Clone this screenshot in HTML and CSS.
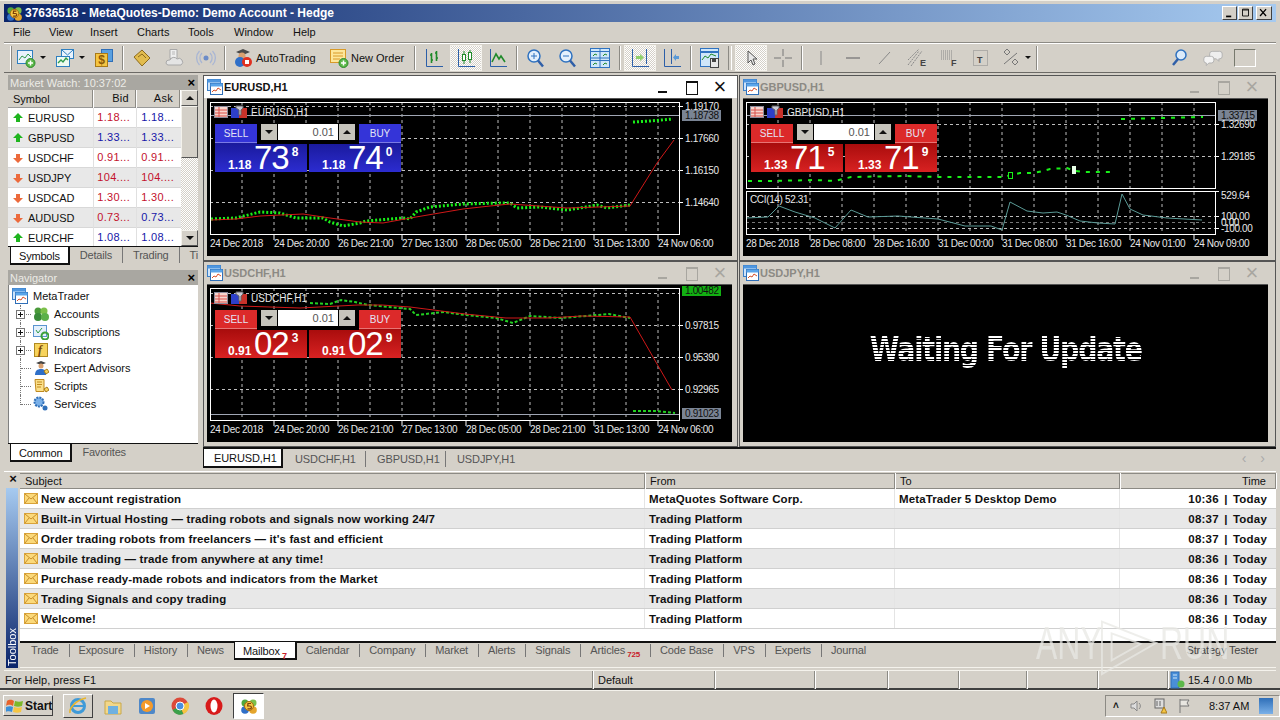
FILE: index.html
```html
<!DOCTYPE html>
<html lang="en">
<head>
  <meta charset="UTF-8">
  <title>37636518 - MetaQuotes-Demo: Demo Account - Hedge</title>
  <link rel="stylesheet" href="styles.css">
</head>
<body>
  <svg class="defs" width="0" height="0">
    <symbol id="i-chartwin" viewBox="0 0 16 16">
      <rect x="0.5" y="0.5" width="13" height="11" fill="#cfe4fa" stroke="#3c7fc8"/>
      <rect x="0.5" y="0.5" width="13" height="3" fill="#4f97e0"/>
      <rect x="3.5" y="4.5" width="12" height="11" fill="#fff" stroke="#2f6fb8"/>
      <rect x="3.5" y="4.5" width="12" height="3" fill="#5aa5ea"/>
      <path d="M5 13l2-2 2 1 2-3 3 2" fill="none" stroke="#d8502a"/>
    </symbol>
    <symbol id="i-mail" viewBox="0 0 14 11">
      <rect x="0.5" y="0.5" width="13" height="10" fill="#fbd97a" stroke="#d9a33a"/>
      <path d="M1 1l6 5 6-5M1 10l4-5M13 10l-4-5" fill="none" stroke="#c98f2a"/>
    </symbol>
    <symbol id="i-up" viewBox="0 0 10 10"><path d="M5 0l5 5H7v4H3V5H0z" fill="#1fb51f"/></symbol>
    <symbol id="i-down" viewBox="0 0 10 10"><path d="M5 10l5-5H7V1H3v4H0z" fill="#ec6a3c"/></symbol>
    <symbol id="i-mt5" viewBox="0 0 18 18">
      <circle cx="5" cy="6" r="3.5" fill="#4fa83d"/>
      <circle cx="13" cy="6" r="3.5" fill="#7cc04a"/>
      <circle cx="5" cy="13" r="3.8" fill="#2f6fc8"/>
      <circle cx="13" cy="13" r="3.8" fill="#e4a52c"/>
      <circle cx="9" cy="9" r="4.5" fill="#f5c542" stroke="#a86a12"/>
      <path d="M11 6.5H8L7.700 9h2.300a1.400 1.400 0 010 2.800H7.500" fill="none" stroke="#7a3d08" stroke-width="1.200"/>
    </symbol>
    <symbol id="i-bookmark" viewBox="0 0 20 20">
      <path d="M2 9l8-7 8 8-8 8z" fill="#e2bc4e" stroke="#8c6a1c"/>
      <path d="M6 9l4-3 4 4" fill="none" stroke="#8c6a1c"/>
    </symbol>
    <symbol id="i-tabs" viewBox="0 0 14 14">
      <rect x="0.5" y="1.500" width="13" height="11" fill="#f7d4cc" stroke="#8c8c9c"/>
      <path d="M1 5h12M1 8h12M1 11h12M5 2v10" stroke="#d8504a"/>
    </symbol>
    <symbol id="i-flags" viewBox="0 0 16 14">
      <rect x="0" y="3" width="8" height="10" fill="#2d3fc8"/>
      <rect x="8" y="3" width="8" height="10" fill="#c8322a"/>
      <path d="M5 1h7v2l-2 2v5H8V5L5 3z" fill="#c9c9d4" stroke="#666"/>
    </symbol>
  </svg>

  <div class="app">
    <header class="titlebar">
      <svg class="title-logo"><use href="#i-mt5"/></svg>
      <span class="title-text">37636518 - MetaQuotes-Demo: Demo Account - Hedge</span>
      <div class="win-buttons">
        <span class="win-btn"><svg viewBox="0 0 14 14"><path d="M3 11h6" stroke="#000" stroke-width="2"/></svg></span>
        <span class="win-btn"><svg viewBox="0 0 14 14"><path d="M3.500 2.500h7v8h-7zM3.500 3.500h7" fill="none" stroke="#000"/></svg></span>
        <span class="win-btn"><svg viewBox="0 0 14 14"><path d="M3 2.500l7 8M10 2.500l-7 8" stroke="#000" stroke-width="1.500"/></svg></span>
      </div>
    </header>

    <nav class="menubar">
      <span class="menu-item">File</span>
      <span class="menu-item">View</span>
      <span class="menu-item">Insert</span>
      <span class="menu-item">Charts</span>
      <span class="menu-item">Tools</span>
      <span class="menu-item">Window</span>
      <span class="menu-item">Help</span>
    </nav>

    <div class="toolbar">
      <span class="grip"></span>
      <span class="tool tool-drop"><svg viewBox="0 0 20 20"><rect x="1.500" y="2.500" width="15" height="13" fill="#e8f2fc" stroke="#2f7fc0"/><path d="M3 12l3-4 3 2 3-4 3 3" fill="none" stroke="#2f9a4a"/><circle cx="14.500" cy="15" r="4.500" fill="#5cb84a" stroke="#2d8a2d"/><path d="M14.500 12.500v5M12 15h5" stroke="#fff" stroke-width="1.500"/></svg><i class="caret"></i></span>
      <span class="tool tool-drop tool-drop-2"><svg viewBox="0 0 20 20"><rect x="6.500" y="1.500" width="12" height="9" fill="#e8f2fc" stroke="#2f7fc0"/><path d="M7 2l5.500 5L18 2" fill="none" stroke="#2f7fc0"/><rect x="1.500" y="8.500" width="13" height="10" fill="#eefaf0" stroke="#2f7fc0"/><path d="M3 15l3-3 2 2 3-4 2 2" fill="none" stroke="#2f9a4a" stroke-width="1.300"/></svg><i class="caret"></i></span>
      <span class="tool"><svg viewBox="0 0 20 20"><rect x="7.500" y="1.500" width="11" height="12" fill="#5aa0e0" stroke="#2f6fb8"/><rect x="1.500" y="5.500" width="12" height="13" fill="#f5c542" stroke="#a87a18"/><text x="7.500" y="16" class="tool-dollar">$</text></svg></span>
      <span class="tool-sep"></span>
      <span class="tool"><svg viewBox="0 0 20 20"><use href="#i-bookmark"/></svg></span>
      <span class="tool"><svg viewBox="0 0 20 20"><path d="M6 1.500h7v9H6z" fill="#eee" stroke="#a8a8a8"/><path d="M8 4h3M8 6h3" stroke="#b8b8b8"/><path d="M2 15a3 3 0 013-3h1a4 4 0 017-1 3.500 3.500 0 014 6H4a2.500 2.500 0 01-2-2z" fill="#e4e4e4" stroke="#a8a8a8"/></svg></span>
      <span class="tool"><svg viewBox="0 0 20 20"><circle cx="10" cy="10" r="2.500" fill="#6c8cc8"/><path d="M6 5a7 7 0 000 10M14 5a7 7 0 010 10M3.500 3a10 10 0 000 14M16.500 3a10 10 0 010 14" fill="none" stroke="#a9b6d4" stroke-width="1.300"/></svg></span>
      <span class="tool-sep"></span>
      <span class="tool tool-text tool-auto"><svg viewBox="0 0 20 20"><path d="M3 4l7-3 7 3-7 3z" fill="#4a4a4a"/><circle cx="9" cy="8" r="3.500" fill="#d9a070"/><circle cx="7" cy="14" r="5" fill="#2f6fc8"/><circle cx="14" cy="14" r="5" fill="#e03020"/><rect x="12" y="12" width="4" height="4" fill="#fff"/></svg>AutoTrading</span>
      <span class="tool tool-text tool-order"><svg viewBox="0 0 20 20"><rect x="1.500" y="1.500" width="15" height="13" fill="#fde79a" stroke="#d89a28"/><path d="M4 5h10M4 8h10M4 11h7" stroke="#d89a28"/><circle cx="14.500" cy="15" r="4.500" fill="#5cb84a" stroke="#2d8a2d"/><path d="M14.500 12.500v5M12 15h5" stroke="#fff" stroke-width="1.500"/></svg>New Order</span>
      <span class="tool-sep"></span>
      <span class="tool"><svg viewBox="0 0 20 20"><path d="M2.500 1v17.500H19" fill="none" stroke="#2c5fa8"/><path d="M7.500 5v10M6 7h1.500M7.500 12H9M12.500 3v10M11 5h1.500M12.500 10H14" stroke="#1f8a2a" stroke-width="1.600"/></svg></span>
      <span class="tool tool-on"><svg viewBox="0 0 20 20"><path d="M2.500 1v17.500H19" fill="none" stroke="#2c5fa8"/><path d="M8 3v13M14 2v13" stroke="#1f8a2a"/><rect x="6.500" y="6.500" width="3" height="6" fill="#fff" stroke="#1f8a2a"/><rect x="12.500" y="4.500" width="3" height="7" fill="#fff" stroke="#1f8a2a"/></svg></span>
      <span class="tool"><svg viewBox="0 0 20 20"><path d="M2.500 1v17.500H19" fill="none" stroke="#2c5fa8"/><path d="M4 14l4-8 3 5 2-3 4 6" fill="none" stroke="#1f8a2a" stroke-width="1.600"/></svg></span>
      <span class="tool-sep"></span>
      <span class="tool"><svg viewBox="0 0 20 20"><circle cx="8" cy="8" r="6" fill="#e4f0fc" stroke="#2f72c0" stroke-width="1.500"/><path d="M8 5v6M5 8h6" stroke="#2f72c0"/><path d="M12 12.500l5 6" stroke="#2f5fa8" stroke-width="2.500"/></svg></span>
      <span class="tool"><svg viewBox="0 0 20 20"><circle cx="8" cy="8" r="6" fill="#e4f0fc" stroke="#2f72c0" stroke-width="1.500"/><path d="M5 8h6" stroke="#2f72c0"/><path d="M12 12.500l5 6" stroke="#2f5fa8" stroke-width="2.500"/></svg></span>
      <span class="tool"><svg viewBox="0 0 20 20"><rect x="0.500" y="0.500" width="19" height="19" fill="#cfe6fa" stroke="#2f72c0"/><path d="M1 10h18M10 1v18M1 3.500h18M1 12.500h18" stroke="#2f72c0"/><path d="M3 8l2-2 2 1M13 8l2-2 2 1M3 17l2-2 2 1M13 17l2-2 2 1" fill="none" stroke="#1f8a2a"/></svg></span>
      <span class="tool-sep tool-sep-wide"></span>
      <span class="tool tool-on"><svg viewBox="0 0 20 20"><path d="M2.500 1v17.500H19M16.500 1v15" fill="none" stroke="#2c5fa8"/><path d="M6 8h4V6l4 3.500-4 3.500v-2H6z" fill="#8fd06a"/></svg></span>
      <span class="tool"><svg viewBox="0 0 20 20"><path d="M2.500 1v17.500H19M9.500 1v15" fill="none" stroke="#2c5fa8"/><path d="M17 8h-3V6l-3 3.500 3 3.500v-2h3z" fill="#5a9ad8"/></svg></span>
      <span class="tool-sep"></span>
      <span class="tool"><svg viewBox="0 0 20 20"><rect x="0.500" y="0.500" width="18" height="18" fill="#cfe6fa" stroke="#2f72c0"/><path d="M1 4h17" stroke="#2f72c0" stroke-width="2"/><path d="M2 12l3-4 3 2 3-4 5 2" fill="none" stroke="#1f8a2a"/><rect x="10.500" y="10.500" width="8" height="9" fill="#e8e8e8" stroke="#444"/><rect x="12" y="11" width="4" height="3" fill="#444"/></svg></span>
      <span class="tool-sep tool-sep-double"></span>
      <span class="tool tool-on"><svg viewBox="0 0 20 20"><path d="M7 3v12l3-3 2 5 2-1-2-5h4z" fill="#e8e8e8" stroke="#555"/></svg></span>
      <span class="tool"><svg viewBox="0 0 20 20"><path d="M10 1v7M10 12v7M1 10h7M12 10h7" stroke="#777"/></svg></span>
      <span class="tool-sep"></span>
      <span class="tool"><svg viewBox="0 0 20 20"><path d="M10 3v14" stroke="#888"/></svg></span>
      <span class="tool"><svg viewBox="0 0 20 20"><path d="M3 10h14" stroke="#777" stroke-width="1.300"/></svg></span>
      <span class="tool"><svg viewBox="0 0 20 20"><path d="M4 16L15 4" stroke="#888"/></svg></span>
      <span class="tool"><svg viewBox="0 0 20 20"><path d="M1 17L12 3M4 18l11-15M1 12L12 1" stroke="#888" stroke-dasharray="2 1"/><text x="13" y="18" class="tool-letter">E</text></svg></span>
      <span class="tool"><svg viewBox="0 0 20 20"><path d="M2 3h12M2 5h12M2 7h12M2 9h12M2 11h12" stroke="#888" stroke-dasharray="1 1"/><text x="12" y="18" class="tool-letter">F</text></svg></span>
      <span class="tool"><svg viewBox="0 0 20 20"><rect x="2.500" y="2.500" width="14" height="15" fill="none" stroke="#888" stroke-dasharray="1 1"/><text x="6" y="15" class="tool-letter">T</text></svg></span>
      <span class="tool tool-narrow"><svg viewBox="0 0 20 20"><path d="M6 1l3 3-3 3-3-3zM14 11l3 3-3 3-3-3zM3 16L16 5" fill="none" stroke="#777"/></svg></span>
      <i class="caret caret-shapes"></i>
      <span class="tool-sep"></span>
      <span class="toolbar-fill"></span>
      <span class="tool"><svg viewBox="0 0 20 20"><circle cx="12" cy="7" r="5" fill="#dcebfa" stroke="#2f72c0" stroke-width="1.500"/><path d="M9 11l-5 6" stroke="#2f5fa8" stroke-width="2.500"/></svg></span>
      <span class="tool tool-chat"><svg viewBox="0 0 24 20"><path d="M11 2h9a3 3 0 013 3v3a3 3 0 01-3 3h-1v3l-3-3h-5a3 3 0 01-3-3V5a3 3 0 013-3z" fill="#eee" stroke="#aaa"/><path d="M4 8h6a3 3 0 013 3v2a3 3 0 01-3 3H7l-3 3v-3a3 3 0 01-3-3v-2a3 3 0 013-3z" fill="#f4f4f4" stroke="#aaa"/></svg></span>
      <span class="tool-box"></span>
    </div>

    <main class="workspace">
      <aside class="side">
        <section class="panel panel-market">
          <div class="panel-title"><span>Market Watch: 10:37:02</span><b class="panel-close">×</b></div>
          <div class="market">
            <div class="market-list">
              <div class="market-head"><span class="c-sym">Symbol</span><span class="c-num">Bid</span><span class="c-num">Ask</span></div>
              <div class="market-row"><span class="c-sym"><svg class="arrow"><use href="#i-up"/></svg>EURUSD</span><span class="c-num red">1.18...</span><span class="c-num blue">1.18...</span></div>
              <div class="market-row"><span class="c-sym"><svg class="arrow"><use href="#i-up"/></svg>GBPUSD</span><span class="c-num blue">1.33...</span><span class="c-num blue">1.33...</span></div>
              <div class="market-row"><span class="c-sym"><svg class="arrow"><use href="#i-down"/></svg>USDCHF</span><span class="c-num red">0.91...</span><span class="c-num red">0.91...</span></div>
              <div class="market-row"><span class="c-sym"><svg class="arrow"><use href="#i-down"/></svg>USDJPY</span><span class="c-num red">104....</span><span class="c-num red">104....</span></div>
              <div class="market-row"><span class="c-sym"><svg class="arrow"><use href="#i-down"/></svg>USDCAD</span><span class="c-num red">1.30...</span><span class="c-num red">1.30...</span></div>
              <div class="market-row"><span class="c-sym"><svg class="arrow"><use href="#i-down"/></svg>AUDUSD</span><span class="c-num red">0.73...</span><span class="c-num blue">0.73...</span></div>
              <div class="market-row"><span class="c-sym"><svg class="arrow"><use href="#i-up"/></svg>EURCHF</span><span class="c-num blue">1.08...</span><span class="c-num blue">1.08...</span></div>
            </div>
            <div class="scrollbar">
              <span class="scroll-btn"><i class="tri-up"></i></span>
              <span class="scroll-thumb"></span>
              <span class="scroll-track"></span>
              <span class="scroll-btn"><i class="tri-down"></i></span>
            </div>
          </div>
          <div class="side-tabs">
            <span class="side-tab active">Symbols</span>
            <span class="side-tab">Details</span>
            <span class="side-tab">Trading</span>
            <span class="side-tab cut">Ti</span>
          </div>
        </section>

        <section class="panel panel-nav">
          <div class="panel-title"><span>Navigator</span><b class="panel-close">×</b></div>
          <div class="tree">
            <div class="tree-root"><svg class="tree-icon"><use href="#i-chartwin"/></svg>MetaTrader</div>
            <div class="tree-row"><span class="twig"><i class="plus"></i></span>
              <svg class="tree-icon" viewBox="0 0 16 16"><circle cx="5" cy="5" r="3.500" fill="#4a9a3a"/><circle cx="11" cy="5" r="3.500" fill="#7cc04a"/><circle cx="5" cy="11" r="4" fill="#3a8a3a"/><circle cx="12" cy="11" r="4" fill="#5cb04a"/></svg>Accounts</div>
            <div class="tree-row"><span class="twig"><i class="plus"></i></span>
              <svg class="tree-icon" viewBox="0 0 16 16"><rect x="0.500" y="1.500" width="13" height="11" fill="#e4f0fc" stroke="#5a94d0"/><path d="M3 6l2 3 4-5" fill="none" stroke="#2f9a4a"/><circle cx="12" cy="12" r="3.500" fill="none" stroke="#3aa03a" stroke-width="2"/></svg>Subscriptions</div>
            <div class="tree-row"><span class="twig"><i class="plus"></i></span>
              <svg class="tree-icon" viewBox="0 0 16 16"><rect x="1.500" y="1.500" width="13" height="13" fill="#f7d35c" stroke="#b08a20"/><text x="5" y="12" class="tree-f">f</text></svg>Indicators</div>
            <div class="tree-row"><span class="twig"></span>
              <svg class="tree-icon" viewBox="0 0 16 16"><path d="M3 3l5-2 5 2-5 2z" fill="#444"/><circle cx="8" cy="6" r="2.500" fill="#d9a070"/><path d="M2 15c0-4 2-6 6-6s5 2 5 6z" fill="#2f6fc8"/><path d="M11 11l3-2 2 3-3 2z" fill="#f7d35c" stroke="#a87a18"/></svg>Expert Advisors</div>
            <div class="tree-row"><span class="twig"></span>
              <svg class="tree-icon" viewBox="0 0 16 16"><path d="M2 1.500h9v12H3z" fill="#fbe08a" stroke="#c08a20"/><path d="M4 4h5M4 6.500h5M4 9h4" stroke="#c08a20"/><path d="M11 11l3-2 2 3-3 2z" fill="#f7d35c" stroke="#a87a18"/></svg>Scripts</div>
            <div class="tree-row tree-last"><span class="twig"></span>
              <svg class="tree-icon" viewBox="0 0 16 16"><circle cx="6" cy="6" r="4.500" fill="#7ab0e8" stroke="#2f6fb8" stroke-width="2" stroke-dasharray="2 1"/><circle cx="12" cy="12" r="2.500" fill="#2f6fb8"/></svg>Services</div>
          </div>
          <div class="side-tabs side-tabs-nav">
            <span class="side-tab active">Common</span>
            <span class="side-tab">Favorites</span>
          </div>
        </section>
      </aside>

      <div class="mdi">
        <div class="charts">
          <article class="chartwin chartwin-active">
            <div class="win-head">
              <svg class="win-icon"><use href="#i-chartwin"/></svg>
              <span class="win-name">EURUSD,H1</span>
              <span class="win-ctl"><i class="ctl-min"></i><i class="ctl-max"></i><i class="ctl-close">×</i></span>
            </div>
            <div class="canvas">
              <svg class="plot" viewBox="207 100 525 156">
                <path class="grid" d="M242 102V234M274 102V234M306 102V234M338 102V234M370 102V234M402 102V234M434 102V234M466 102V234M498 102V234M530 102V234M562 102V234M594 102V234M626 102V234M658 102V234M210 106.500H679M210 138.500H679M210 170.500H679M210 202.500H679"/>
                <path class="price-line" d="M210 115.500H679"/>
                <polyline class="candles" points="211,219 236,218 260,212 280,213 296,218 323,218 330,222 343,226 360,223 366,221 403,218 410,219 416,212 430,207 463,204 500,203 510,203 517,208 540,207 567,210 580,208 597,205 607,208 630,205"/>
                <polyline class="candles" points="633,122 650,121 673,119"/>
                <polyline class="ma" points="211,220 236,219 260,216 303,214 330,218 360,222 383,223 416,217 463,209 490,206 510,204 567,208 630,206 657,163 674,140"/>
                <rect class="frame" x="210.500" y="102.500" width="469" height="132"/>
                <path class="tick" d="M274 234v6M338 234v6M402 234v6M466 234v6M530 234v6M594 234v6M658 234v6M679 106.500h4M679 138.500h4M679 170.500h4M679 202.500h4"/>
                <rect class="tag-gray" x="682" y="110" width="39" height="11"/>
                <g class="axis">
                  <text x="685" y="110">1.19170</text>
                  <text class="tag-text" x="685" y="119">1.18738</text>
                  <text x="685" y="142">1.17660</text>
                  <text x="685" y="174">1.16150</text>
                  <text x="685" y="206">1.14640</text>
                  <text x="210" y="247">24 Dec 2018</text>
                  <text x="274" y="247">24 Dec 20:00</text>
                  <text x="338" y="247">26 Dec 21:00</text>
                  <text x="402" y="247">27 Dec 13:00</text>
                  <text x="466" y="247">28 Dec 05:00</text>
                  <text x="530" y="247">28 Dec 21:00</text>
                  <text x="594" y="247">31 Dec 13:00</text>
                  <text x="658" y="247">24 Nov 06:00</text>
                </g>
              </svg>
              <div class="chart-label"><svg class="label-icon"><use href="#i-tabs"/></svg><svg class="label-icon label-flags"><use href="#i-flags"/></svg>EURUSD,H1</div>
              <div class="trade trade-blue">
                <div class="trade-top">
                  <span class="side-btn">SELL</span>
                  <div class="stepper"><span class="step"><i class="tri-down"></i></span><span class="lot">0.01</span><span class="step"><i class="tri-up"></i></span></div>
                  <span class="side-btn">BUY</span>
                </div>
                <div class="trade-prices">
                  <div class="price"><span class="pre">1.18</span><span class="big">73</span><span class="pip">8</span></div>
                  <div class="price"><span class="pre">1.18</span><span class="big">74</span><span class="pip">0</span></div>
                </div>
              </div>
            </div>
          </article>

          <article class="chartwin">
            <div class="win-head">
              <svg class="win-icon"><use href="#i-chartwin"/></svg>
              <span class="win-name">GBPUSD,H1</span>
              <span class="win-ctl"><i class="ctl-min"></i><i class="ctl-max"></i><i class="ctl-close">×</i></span>
            </div>
            <div class="canvas">
              <svg class="plot" viewBox="743 100 525 156">
                <path class="grid" d="M778 102V234M810 102V234M842 102V234M874 102V234M906 102V234M938 102V234M970 102V234M1002 102V234M1034 102V234M1066 102V234M1098 102V234M1130 102V234M1162 102V234M1194 102V234M746 124.500H1215M746 156.500H1215M746 216.500H1215M746 228.500H1215"/>
                <path class="grid grid-dim" d="M746 222.500H1215"/>
                <path class="price-line" d="M746 115.500H1215"/>
                <polyline class="candles candles-sparse" points="748,181 771,181 815,180 835,181 843,179 851,177 905,176 938,177 1002,177 1012,175 1020,173 1034,173 1043,171 1050,169 1067,168 1075,171 1083,172 1115,172"/>
                <polyline class="candles candles-sparse" points="1121,119 1203,117"/>
                <rect class="candle-open" x="1008.500" y="172.500" width="4" height="6"/>
                <rect class="candle-fill" x="1072" y="166" width="4" height="8"/>
                <polyline class="cci" points="746,218 768,217 779,206 795,212 815,218 835,228 851,210 868,217 898,216 938,219 965,226 991,226 1002,230 1010,202 1027,211 1043,213 1057,212 1066,215 1080,221 1098,223 1115,224 1122,194 1130,209 1143,215 1167,218 1202,220"/>
                <rect class="frame" x="746.500" y="102.500" width="469" height="86"/>
                <rect class="frame" x="746.500" y="191.500" width="469" height="43"/>
                <path class="tick" d="M810 234v6M874 234v6M938 234v6M1002 234v6M1066 234v6M1130 234v6M1194 234v6M1215 124.500h4M1215 156.500h4M1215 191.500h4M1215 216.500h4M1215 228.500h4"/>
                <rect class="tag-gray" x="1218" y="110" width="39" height="11"/>
                <g class="axis">
                  <text class="tag-text" x="1221" y="119">1.33715</text>
                  <text x="1221" y="128">1.32690</text>
                  <text x="1221" y="160">1.29185</text>
                  <text x="1221" y="199">529.64</text>
                  <text x="1221" y="220">100.00</text>
                  <text x="1221" y="226">0.00</text>
                  <text x="1221" y="232">-100.00</text>
                  <text x="750" y="203">CCI(14) 52.31</text>
                  <text x="746" y="247">28 Dec 2018</text>
                  <text x="810" y="247">28 Dec 08:00</text>
                  <text x="874" y="247">28 Dec 16:00</text>
                  <text x="938" y="247">31 Dec 00:00</text>
                  <text x="1002" y="247">31 Dec 08:00</text>
                  <text x="1066" y="247">31 Dec 16:00</text>
                  <text x="1130" y="247">24 Nov 01:00</text>
                  <text x="1194" y="247">24 Nov 09:00</text>
                </g>
              </svg>
              <div class="chart-label"><svg class="label-icon"><use href="#i-tabs"/></svg><svg class="label-icon label-flags"><use href="#i-flags"/></svg>GBPUSD,H1</div>
              <div class="trade trade-red">
                <div class="trade-top">
                  <span class="side-btn">SELL</span>
                  <div class="stepper"><span class="step"><i class="tri-down"></i></span><span class="lot">0.01</span><span class="step"><i class="tri-up"></i></span></div>
                  <span class="side-btn">BUY</span>
                </div>
                <div class="trade-prices">
                  <div class="price"><span class="pre">1.33</span><span class="big">71</span><span class="pip">5</span></div>
                  <div class="price"><span class="pre">1.33</span><span class="big">71</span><span class="pip">9</span></div>
                </div>
              </div>
            </div>
          </article>

          <article class="chartwin">
            <div class="win-head">
              <svg class="win-icon"><use href="#i-chartwin"/></svg>
              <span class="win-name">USDCHF,H1</span>
              <span class="win-ctl"><i class="ctl-min"></i><i class="ctl-max"></i><i class="ctl-close">×</i></span>
            </div>
            <div class="canvas">
              <svg class="plot" viewBox="207 286 525 156">
                <path class="grid" d="M242 288V420M274 288V420M306 288V420M338 288V420M370 288V420M402 288V420M434 288V420M466 288V420M498 288V420M530 288V420M562 288V420M594 288V420M626 288V420M658 288V420M210 293.500H679M210 325.500H679M210 357.500H679M210 389.500H679"/>
                <path class="price-line" d="M210 414.500H679"/>
                <polyline class="candles candles-thin" points="310,303 330,304 341,300 355,302 368,305 410,309 416,315 444,312 465,315 496,318 513,323 530,316 561,318 609,314 630,318"/>
                <polyline class="candles candles-thin" points="633,411 655,411 675,413"/>
                <polyline class="ma" points="210,303 240,306 300,308 358,305 382,305 410,307 465,314 506,318 547,318 582,316 630,317 672,390"/>
                <rect class="frame" x="210.500" y="288.500" width="469" height="132"/>
                <path class="tick" d="M274 420v6M338 420v6M402 420v6M466 420v6M530 420v6M594 420v6M658 420v6M679 325.500h4M679 357.500h4M679 389.500h4"/>
                <rect class="tag-green" x="682" y="285" width="39" height="11"/>
                <rect class="tag-gray" x="682" y="408" width="39" height="11"/>
                <g class="axis">
                  <text class="tag-text" x="685" y="294">1.00482</text>
                  <text x="685" y="329">0.97815</text>
                  <text x="685" y="361">0.95390</text>
                  <text x="685" y="393">0.92965</text>
                  <text class="tag-text" x="685" y="417">0.91023</text>
                  <text x="210" y="433">24 Dec 2018</text>
                  <text x="274" y="433">24 Dec 20:00</text>
                  <text x="338" y="433">26 Dec 21:00</text>
                  <text x="402" y="433">27 Dec 13:00</text>
                  <text x="466" y="433">28 Dec 05:00</text>
                  <text x="530" y="433">28 Dec 21:00</text>
                  <text x="594" y="433">31 Dec 13:00</text>
                  <text x="658" y="433">24 Nov 06:00</text>
                </g>
              </svg>
              <div class="chart-label"><svg class="label-icon"><use href="#i-tabs"/></svg><svg class="label-icon label-flags"><use href="#i-flags"/></svg>USDCHF,H1</div>
              <div class="trade trade-red">
                <div class="trade-top">
                  <span class="side-btn">SELL</span>
                  <div class="stepper"><span class="step"><i class="tri-down"></i></span><span class="lot">0.01</span><span class="step"><i class="tri-up"></i></span></div>
                  <span class="side-btn">BUY</span>
                </div>
                <div class="trade-prices">
                  <div class="price"><span class="pre">0.91</span><span class="big">02</span><span class="pip">3</span></div>
                  <div class="price"><span class="pre">0.91</span><span class="big">02</span><span class="pip">9</span></div>
                </div>
              </div>
            </div>
          </article>

          <article class="chartwin">
            <div class="win-head">
              <svg class="win-icon"><use href="#i-chartwin"/></svg>
              <span class="win-name">USDJPY,H1</span>
              <span class="win-ctl"><i class="ctl-min"></i><i class="ctl-max"></i><i class="ctl-close">×</i></span>
            </div>
            <div class="canvas canvas-wait">
              <span class="waiting">Waiting For Update</span>
            </div>
          </article>
        </div>

        <div class="chart-tabs">
          <span class="chart-tab active">EURUSD,H1</span>
          <span class="chart-tab">USDCHF,H1</span>
          <span class="chart-tab">GBPUSD,H1</span>
          <span class="chart-tab">USDJPY,H1</span>
          <span class="chart-tabs-nav"><i>‹</i><i>›</i></span>
        </div>
      </div>
    </main>

    <section class="toolbox">
      <div class="toolbox-rail">
        <b class="rail-close">×</b>
        <span class="rail-name"><span>Toolbox</span></span>
      </div>
      <div class="toolbox-body">
        <div class="mail-head">
          <span>Subject</span><span>From</span><span>To</span><span class="mail-time">Time</span>
        </div>
        <div class="mail-list">
          <div class="mail-row"><span class="mail-subject"><svg class="mail-icon"><use href="#i-mail"/></svg>New account registration</span><span>MetaQuotes Software Corp.</span><span>MetaTrader 5 Desktop Demo</span><span class="mail-time">10:36 | Today</span></div>
          <div class="mail-row"><span class="mail-subject"><svg class="mail-icon"><use href="#i-mail"/></svg>Built-in Virtual Hosting — trading robots and signals now working 24/7</span><span>Trading Platform</span><span></span><span class="mail-time">08:37 | Today</span></div>
          <div class="mail-row"><span class="mail-subject"><svg class="mail-icon"><use href="#i-mail"/></svg>Order trading robots from freelancers — it's fast and efficient</span><span>Trading Platform</span><span></span><span class="mail-time">08:37 | Today</span></div>
          <div class="mail-row"><span class="mail-subject"><svg class="mail-icon"><use href="#i-mail"/></svg>Mobile trading — trade from anywhere at any time!</span><span>Trading Platform</span><span></span><span class="mail-time">08:36 | Today</span></div>
          <div class="mail-row"><span class="mail-subject"><svg class="mail-icon"><use href="#i-mail"/></svg>Purchase ready-made robots and indicators from the Market</span><span>Trading Platform</span><span></span><span class="mail-time">08:36 | Today</span></div>
          <div class="mail-row"><span class="mail-subject"><svg class="mail-icon"><use href="#i-mail"/></svg>Trading Signals and copy trading</span><span>Trading Platform</span><span></span><span class="mail-time">08:36 | Today</span></div>
          <div class="mail-row"><span class="mail-subject"><svg class="mail-icon"><use href="#i-mail"/></svg>Welcome!</span><span>Trading Platform</span><span></span><span class="mail-time">08:36 | Today</span></div>
        </div>
        <div class="tool-tabs">
          <span class="tool-tab">Trade</span>
          <span class="tool-tab">Exposure</span>
          <span class="tool-tab">History</span>
          <span class="tool-tab tool-tab-before">News</span>
          <span class="tool-tab active">Mailbox<em>7</em></span>
          <span class="tool-tab">Calendar</span>
          <span class="tool-tab">Company</span>
          <span class="tool-tab">Market</span>
          <span class="tool-tab">Alerts</span>
          <span class="tool-tab">Signals</span>
          <span class="tool-tab">Articles<em class="badge">725</em></span>
          <span class="tool-tab">Code Base</span>
          <span class="tool-tab">VPS</span>
          <span class="tool-tab">Experts</span>
          <span class="tool-tab tool-tab-before">Journal</span>
          <span class="tool-tab tool-tab-right">Strategy Tester</span>
        </div>
      </div>
    </section>

    <footer class="statusbar">
      <span class="st st-help">For Help, press F1</span>
      <span class="st st-profile">Default</span>
      <span class="st st-a"></span>
      <span class="st st-b"></span>
      <span class="st st-c"></span>
      <span class="st st-d"></span>
      <span class="st st-e"></span>
      <span class="st st-f"></span>
      <span class="st st-net"><svg viewBox="0 0 16 18"><rect x="2" y="1" width="8" height="16" fill="#4a8fd8" stroke="#2f6fb8"/><path d="M4 4h4M4 7h4" stroke="#cfe6fa"/><circle cx="12" cy="13" r="3.500" fill="#5cb84a"/></svg>15.4 / 0.0 Mb</span>
    </footer>
  </div>

  <div class="taskbar">
    <span class="start"><svg viewBox="0 0 18 16"><path d="M1 3c3-2 5-1 7 0L7 8C5 7 3 6 0 8z" fill="#e8622a"/><path d="M9 3c3 1 5 1 8 0l-1 5c-3 1-5 1-8 0z" fill="#7cb82a"/><path d="M0 9c3-1 5-1 7 0l-1 5c-2-1-4-1-7 0z" fill="#3a8fd8"/><path d="M8 9c3 1 5 1 8 0l-1 5c-3 1-5 1-8 0z" fill="#f5c542"/></svg>Start</span>
    <span class="task task-btn"><svg viewBox="0 0 20 20"><circle cx="10" cy="10" r="6.500" fill="none" stroke="#3f9ad8" stroke-width="3"/><path d="M4 10h13" stroke="#3f9ad8" stroke-width="2"/><path d="M2 17C1 12 8 4 18 2" fill="none" stroke="#e8b52a" stroke-width="1.500"/></svg></span>
    <span class="task"><svg viewBox="0 0 20 20"><path d="M2 5h6l2 2h8v11H2z" fill="#f2d78a" stroke="#c8a84a"/><rect x="5" y="10" width="10" height="8" fill="#6fb0e0"/></svg></span>
    <span class="task"><svg viewBox="0 0 20 20"><rect x="2" y="2" width="16" height="16" rx="2" fill="#4f88c8"/><circle cx="10" cy="10" r="6" fill="#f59a2a"/><path d="M8 7l5 3-5 3z" fill="#fff"/></svg></span>
    <span class="task"><svg viewBox="0 0 20 20"><circle cx="10" cy="10" r="8.500" fill="#dc4a3a"/><path d="M10 10L2.500 14a8.500 8.500 0 0011 4z" fill="#3aa04a"/><path d="M10 10l3.500 8A8.500 8.500 0 0018 6z" fill="#f5c542"/><circle cx="10" cy="10" r="4" fill="#4a8fe0" stroke="#fff"/></svg></span>
    <span class="task"><svg viewBox="0 0 20 20"><ellipse cx="10" cy="10" rx="8.500" ry="9" fill="#d81a1a"/><ellipse cx="10" cy="10" rx="3.500" ry="6.500" fill="#fff"/></svg></span>
    <span class="task task-active"><svg viewBox="0 0 18 18"><use href="#i-mt5"/></svg></span>
    <span class="tray">
      <i class="tray-chev">˄</i>
      <svg viewBox="0 0 14 14"><path d="M2 5h3l3-3v10L5 9H2z" fill="#ddd" stroke="#888"/><path d="M10 4a4 4 0 010 6" fill="none" stroke="#888"/></svg>
      <svg viewBox="0 0 14 16"><rect x="2" y="1" width="9" height="9" fill="#ddd" stroke="#666"/><path d="M4 3v5M7 3v5" stroke="#666"/><path d="M8 15l3-6 3 6z" fill="#f5c542" stroke="#a87a18"/></svg>
      <svg viewBox="0 0 14 16"><path d="M3 1v14M3 2h9l-2 3 2 3H3" fill="#e8e6e0" stroke="#777"/></svg>
      <span class="tray-time">8:37 AM</span>
      <i class="tray-desk"></i>
    </span>
  </div>

  <div class="watermark">
    <span>ANY</span>
    <svg viewBox="0 0 62 72"><path d="M2 14L58 36 2 68zM12 26L42 37 12 54z" fill="none" stroke="currentColor" stroke-width="2"/></svg>
    <span>RUN</span>
  </div>
</body>
</html>
```

FILE: styles.css
```css
* { box-sizing: border-box; }
html, body {
  margin: 0;
  height: 720px;
  overflow: hidden;
}
body {
  position: relative;
  background: #d4d0c8;
  font-family: "Liberation Sans", Arial, sans-serif;
  font-size: 11px;
  color: #111;
}
.defs { position: absolute; }
i, em { font-style: normal; }

.app {
  height: 690px;
  display: flex;
  flex-direction: column;
  padding: 4px 4px 2px;
  border-top: 1px solid #f2efe6;
  border-bottom: 2px solid #404040;
}

/* title bar */
.titlebar {
  flex: 0 0 18px;
  margin-top: -1px;
  display: flex;
  align-items: center;
  padding: 0 2px;
  background: linear-gradient(to right, #0a246a, #a6caf0);
  color: #fff;
  font-weight: bold;
  font-size: 12px;
}
.title-logo { width: 17px; height: 17px; margin-right: 2px; }
.win-buttons { margin-left: auto; display: flex; gap: 1px; padding-right: 2px; }
.win-btn {
  width: 15px;
  height: 14px;
  background: #d4d0c8;
  border: 1px solid;
  border-color: #fff #404040 #404040 #fff;
}
.win-btn:last-child { margin-left: 2px; width: 16px; }
.win-btn svg { display: block; width: 13px; height: 12px; }

/* menu */
.menubar {
  flex: 0 0 20px;
  display: flex;
  align-items: center;
  padding-left: 9px;
  font-size: 11px;
}
.menu-item:nth-child(1) { width: 36px; }
.menu-item:nth-child(2) { width: 41px; }
.menu-item:nth-child(3) { width: 47px; }
.menu-item:nth-child(4) { width: 51px; }
.menu-item:nth-child(5) { width: 46px; }
.menu-item:nth-child(6) { width: 59px; }

/* toolbar */
.toolbar {
  flex: 0 0 31px;
  display: flex;
  align-items: center;
  padding-left: 4px;
  border-top: 1px solid #8c8a84;
  box-shadow: inset 0 1px 0 #fff;
  border-bottom: 1px solid #6c6a66;
}
.grip { width: 2px; height: 24px; margin-left: 2px; border-left: 1px solid #fff; border-right: 1px solid #8c8a84; }
.tool {
  flex: 0 0 32px;
  height: 26px;
  display: flex;
  align-items: center;
  justify-content: center;
}
.tool svg { width: 20px; height: 20px; flex: none; }
.tool-drop { flex-basis: 39px; justify-content: flex-start; padding-left: 4px; gap: 4px; }
.tool-drop-2 { flex-basis: 37px; }
.tool-on {
  background: repeating-conic-gradient(#fff 0 25%, #d4d0c8 0 50%) 0 0 / 2px 2px;
  border: 1px solid #f4f2ec;
}
.tool-text { justify-content: flex-start; gap: 3px; color: #111; }
.tool-auto { flex-basis: 96px; padding-left: 5px; }
.tool-order { flex-basis: 88px; padding-left: 5px; gap: 2px; }
.tool-dollar { font-size: 12px; font-weight: bold; fill: #8a5a08; text-anchor: middle; }
.tool-letter { font-size: 9px; font-weight: bold; fill: #444; }
.tree-f { font-size: 12px; font-style: italic; font-weight: bold; fill: #7a4a08; font-family: "Liberation Serif", serif; }
.tool-sep { flex: none; width: 2px; height: 24px; margin: 0 2px; border-left: 1px solid #8c8a84; border-right: 1px solid #fff; }
.tool-sep-wide { margin: 0 3px; }
.tool-sep-double { width: 4px; margin: 0 3px 0 2px; }
.tool-narrow { flex-basis: 28px; padding-left: 0; }
.caret {
  display: inline-block;
  width: 0;
  height: 0;
  border: 3px solid transparent;
  border-top: 3px solid #111;
  border-bottom: 0;
}
.caret-shapes { margin: 0 3px 0 0; }
.toolbar-fill { flex: 1; }
.tool-chat { margin-left: 2px; }
.tool-box {
  flex: 0 0 22px;
  height: 18px;
  margin: 0 20px 0 5px;
  border: 1px solid;
  border-color: #77796e #fff #fff #77796e;
}

/* main area */
.workspace {
  flex: 0 0 393px;
  display: flex;
  margin-top: 2px;
  gap: 5px;
}
.side {
  flex: 0 0 194px;
  min-width: 0;
  overflow: hidden;
  padding-left: 4px;
  display: flex;
  flex-direction: column;
  gap: 5px;
}
.panel { display: flex; flex-direction: column; min-width: 0; }
.panel-market { flex: 0 0 190px; }
.panel-nav { flex: 0 0 193px; }
.panel-title {
  flex: 0 0 15px;
  display: flex;
  align-items: center;
  justify-content: space-between;
  padding: 0 3px 0 2px;
  background: #a9a7a1;
  color: #ecebe6;
  font-size: 11px;
}
.panel-close { color: #000; font-size: 13px; line-height: 1; }
.market { display: flex; height: 156px; overflow: hidden; flex: none; box-shadow: inset 1px 0 0 #808080; }
.market-list { flex: 1; background: #fff; min-width: 0; }
.market-head, .market-row { display: grid; grid-template-columns: 85px 43px 44px; align-items: center; }
.market-head { height: 18px; background: #d4d0c8; box-shadow: inset 0 -1px 0 #999; }
.market-head span { height: 18px; line-height: 17px; border-right: 1px solid #8c8a84; box-shadow: 1px 0 0 #fff; }
.market-row { height: 20px; border-bottom: 1px solid #d8d8d8; }
.market-row:nth-child(odd) { background: #e8e8e8; }
.market-row .c-num { height: 20px; line-height: 19px; border-left: 1px solid #e0e0e0; }
.c-sym { padding-left: 5px; display: flex; align-items: center; }
.arrow { width: 10px; height: 10px; margin-right: 5px; flex: none; }
.c-num { text-align: right; padding-right: 6px; letter-spacing: .3px; }
.red { color: #c3112d; }
.blue { color: #1616a8; }
.scrollbar { flex: 0 0 17px; display: flex; flex-direction: column; background: repeating-conic-gradient(#fff 0 25%, #d4d0c8 0 50%) 0 0 / 2px 2px; }
.scroll-btn, .scroll-thumb {
  display: flex;
  align-items: center;
  justify-content: center;
  background: #d4d0c8;
  border: 1px solid;
  border-color: #f4f2ec #555 #555 #f4f2ec;
}
.scroll-btn { flex: 0 0 16px; }
.scroll-thumb { flex: 0 0 52px; }
.scroll-track { flex: 1; }
.tri-up, .tri-down { display: block; width: 0; height: 0; border: 4px solid transparent; }
.tri-up { border-bottom: 4px solid #111; border-top: 0; }
.tri-down { border-top: 4px solid #111; border-bottom: 0; }

.side-tabs {
  flex: 1;
  display: flex;
  padding-left: 2px;
  overflow: hidden;
  border-top: 1px solid #111;
  color: #555;
  letter-spacing: -.2px;
}
.side-tab { flex: none; padding: 1px 10px 0; height: 16px; line-height: 14px; border-right: 1px solid #777; }
.side-tab.active {
  margin-top: -1px;
  height: 19px;
  padding: 3px 8px 0;
  background: #fff;
  color: #111;
  border: 1px solid #111;
  border-top: 0;
  line-height: 14px;
  border-right-width: 2px;
  border-bottom-width: 2px;
}
.side-tabs-nav .side-tab:last-child { border-right: 0; }
.side-tab.cut { padding-right: 0; border-right: 0; }

.tree { height: 158px; flex: none; background: #fff; box-shadow: inset 1px 0 0 #808080; padding-top: 2px; font-size: 11px; }
.tree-root { height: 18px; display: flex; align-items: center; padding-left: 4px; }
.tree-icon { width: 16px; height: 16px; flex: none; margin-right: 5px; }
.tree-row { height: 18px; display: flex; align-items: center; padding-left: 12px; }
.twig {
  position: relative;
  flex: 0 0 13px;
  height: 18px;
  border-left: 1px dotted #777;
}
.twig::after {
  content: "";
  position: absolute;
  left: 0;
  right: 2px;
  top: 9px;
  border-top: 1px dotted #777;
}
.tree-last .twig { height: 10px; margin-bottom: 8px; }
.plus {
  position: absolute;
  z-index: 1;
  left: -5px;
  top: 5px;
  width: 9px;
  height: 9px;
  background: linear-gradient(#111, #111) center / 5px 1px no-repeat, linear-gradient(#111, #111) center / 1px 5px no-repeat, #fff;
  border: 1px solid #777;
}

/* chart windows */
.mdi { flex: 1; display: flex; flex-direction: column; min-width: 0; }
.charts {
  flex: 0 0 372px;
  display: grid;
  grid-template-columns: 535px 1fr;
  grid-template-rows: 186px 186px;
  column-gap: 1px;
}
.chartwin {
  position: relative;
  border: 1px solid #555;
  padding: 0 3px;
}
.win-head { height: 22px; display: flex; align-items: center; color: #8c8a84; font-weight: bold; font-size: 11px; }
.chartwin-active .win-head { background: #fff; color: #111; margin: 0 -3px; padding: 0 3px; }
.win-icon { width: 16px; height: 16px; margin-right: 1px; flex: none; }
.win-name { flex: 1; }
.win-ctl { display: flex; align-items: center; color: #a8a6a0; padding-right: 6px; }
.chartwin:nth-child(odd) .win-ctl { padding-right: 0; }
.chartwin-active .win-ctl { color: #111; }
.win-ctl i { display: block; width: 28px; height: 14px; position: relative; }
.ctl-min::after { content: ""; position: absolute; left: 8px; bottom: 1px; width: 9px; height: 2px; background: currentColor; }
.ctl-max::after { content: ""; position: absolute; left: 8px; top: 1px; width: 10px; height: 11px; border: 1px solid currentColor; border-top-width: 2px; }
.ctl-close { font-size: 22px; line-height: 13px; font-weight: normal; text-align: center; }
.canvas {
  position: relative;
  width: 525px;
  height: 158px;
  padding-top: 1px;
  background: #000;
  border-top: 1px solid #555;
}
.plot { display: block; width: 525px; height: 156px; }
.frame { fill: none; stroke: #fff; }
.grid { fill: none; stroke: #bdbdbd; stroke-dasharray: 3 3; }
.grid-dim { stroke: #777; }
.price-line { stroke: #a0a6b4; fill: none; }
.candles { fill: none; stroke: #18f018; stroke-width: 3; stroke-dasharray: 2 2; }
.candles-sparse { stroke-width: 2; stroke-dasharray: 4 6; }
.candles-thin { stroke-width: 2; stroke-dasharray: 3 2; stroke: #22d022; }
.candle-open { fill: #000; stroke: #18f018; }
.candle-fill { fill: #e8ffe8; }
.ma { fill: none; stroke: #d01818; }
.cci { fill: none; stroke: #5a9a96; }
.tick { stroke: #fff; fill: none; }
.tag-gray { fill: #7a8494; }
.tag-green { fill: #12b012; }
.axis text { fill: #e8e8e8; font-size: 10px; letter-spacing: -.35px; }
.axis .tag-text { fill: #101010; }

.chart-label {
  position: absolute;
  left: 7px;
  top: 6px;
  display: flex;
  align-items: center;
  height: 14px;
  color: #e8e8e8;
  font-size: 10px;
}
.label-icon { width: 14px; height: 14px; margin-right: 3px; }
.label-flags { width: 16px; margin-right: 4px; }

/* one click trading */
.trade { position: absolute; left: 8px; top: 25px; width: 186px; }
.trade-top { display: flex; height: 19px; justify-content: space-between; }
.side-btn {
  flex: 0 0 42px;
  text-align: center;
  line-height: 19px;
  font-size: 10px;
  color: #e4e4f4;
  box-shadow: inset 0 -1px 0 rgba(255, 255, 255, .35);
}
.trade-blue .side-btn { background: #3434d8; }
.trade-red .side-btn { background: #dc2a2a; }
.stepper {
  flex: 1;
  display: flex;
  align-items: flex-start;
  padding: 0 4px 3px;
  height: 20px;
  gap: 1px;
  background: #000;
  position: relative;
  z-index: 1;
}
.step { flex: 0 0 16px; height: 16px; display: flex; align-items: center; justify-content: center; background: #c6c4bc; }
.lot { flex: 1; height: 16px; line-height: 16px; text-align: right; padding-right: 4px; background: #fff; color: #555; }
.trade-prices { display: flex; gap: 2px; }
.price {
  flex: 0 0 92px;
  height: 29px;
  display: flex;
  align-items: flex-start;
  color: #fff;
  padding-left: 13px;
}
.trade-blue .price { background: linear-gradient(#1a1a9c, #2c2cd0); }
.trade-red .price { background: linear-gradient(#a80c0c, #d82222); }
.pre { font-size: 12px; font-weight: bold; margin-top: 15px; width: 26px; flex: none; }
.big { font-size: 33px; line-height: 29px; letter-spacing: -1px; }
.pip { font-size: 12px; font-weight: bold; margin-left: 3px; margin-top: 2px; }

.canvas-wait { display: flex; align-items: center; justify-content: center; }
.waiting {
  flex: none;
  margin: 0 0 30px 0;
  font-family: "DejaVu Sans", sans-serif;
  font-size: 33px;
  font-weight: bold;
  letter-spacing: -1.500px;
  white-space: nowrap;
  transform: scaleX(.815);
  color: transparent;
  background: repeating-linear-gradient(#fff 0 2px, #000 2px 3px);
  -webkit-background-clip: text;
  background-clip: text;
}

.chart-tabs {
  flex: 0 0 20px;
  display: flex;
  align-items: flex-start;
  border-top: 2px solid #111;
  color: #555;
}
.chart-tab { flex: none; padding: 2px 0 0 11px; width: 80px; height: 16px; line-height: 13px; font-size: 11px; letter-spacing: -.1px; }
.chart-tab:nth-child(n+2) { margin-top: 2px; border-right: 1px solid #777; }
.chart-tab:nth-child(2) { width: 83px; padding-left: 12px; }
.chart-tab:nth-child(4) { border-right: 0; }
.chart-tab.active { height: 19px; padding: 3px 0 0 10px; background: #fff; color: #111; border: 1px solid #111; border-top: 0; border-right-width: 2px; border-bottom-width: 2px; }
.chart-tabs-nav { margin-left: auto; display: flex; gap: 14px; padding: 0 11px 0 0; color: #aaa; font-size: 14px; line-height: 18px; }

/* toolbox */
.toolbox {
  flex: 0 0 197px;
  display: flex;
  margin-top: 3px;
  border-top: 1px solid #fff;
  padding-left: 2px;
}
.toolbox-rail { flex: 0 0 14px; display: flex; flex-direction: column; }
.rail-close { height: 14px; text-align: center; font-size: 13px; line-height: 13px; }
.rail-name {
  flex: 1;
  display: flex;
  align-items: flex-end;
  justify-content: center;
  margin: 2px 2px 0 0;
  background: linear-gradient(#a6caf0, #0a246a);
  color: #fff;
  font-size: 11px;
}
.rail-name span { writing-mode: vertical-rl; transform: rotate(180deg); padding-top: 2px; line-height: 12px; }
.toolbox-body { flex: 1; display: flex; flex-direction: column; min-width: 0; padding-top: 1px; }
.mail-head, .mail-row {
  display: grid;
  grid-template-columns: 625px 250px 225px 1fr;
  align-items: center;
}
.mail-head { height: 16px; background: #d4d0c8; box-shadow: inset 0 1px 0 #8c8a84, inset 0 -1px 0 #8c8a84; }
.mail-head span { height: 16px; line-height: 16px; padding-left: 5px; border-right: 1px solid #8c8a84; box-shadow: 1px 0 0 #fff; }
.mail-list { flex: 0 0 152px; background: #fff; }
.mail-row { height: 20px; border-bottom: 1px solid #d0d0d0; font-weight: bold; font-size: 11.500px; letter-spacing: .12px; }
.mail-row:nth-child(even) { background: #e8e8e8; }
.mail-row span { display: flex; align-items: center; height: 19px; padding-left: 4px; border-right: 1px solid #e4e4e4; }
.mail-icon { width: 14px; height: 11px; margin-right: 3px; flex: none; }
.mail-head .mail-time { text-align: right; padding-right: 9px; }
.mail-row .mail-time { justify-content: flex-end; padding-right: 9px; border-right: 0; word-spacing: 2px; letter-spacing: .2px; }
.tool-tabs {
  flex: 1;
  display: flex;
  padding-left: 2px;
  border-top: 2px solid #111;
  color: #555;
  box-shadow: inset 0 -1px 0 #f4f2ec;
}
.tool-tab { margin-top: 1px; height: 13px; line-height: 13px; padding: 0 10px 0 9px; border-right: 1px solid #777; position: relative; letter-spacing: -.15px; }
.tool-tab-before { border-right: 0; }
.tool-tab.active {
  margin-top: -1px;
  height: 18px;
  line-height: 16px;
  padding: 1px 15px 0 8px;
  background: #fff;
  color: #111;
  border: 1px solid #111;
  border-top: 0;
  border-right-width: 2px;
  border-bottom-width: 2px;
}
.tool-tab em { position: absolute; right: 8px; bottom: -3px; color: #c8202a; font-weight: bold; font-size: 9px; line-height: 9px; }
.tool-tab .badge { position: static; margin-left: 2px; font-size: 8px; vertical-align: -3px; }
.tool-tab-right { margin-left: auto; border-right: 0; color: #444; padding-right: 18px; }

/* status bar */
.statusbar {
  flex: 1;
  display: flex;
  align-items: center;
  margin-top: 2px;
  padding-bottom: 5px;
  border-top: 1px solid #f4f2ec;
}
.st { height: 18px; line-height: 18px; padding-left: 5px; border-right: 1px solid #8c8a84; box-shadow: 1px 0 0 #fff; }
.st-help { flex: 0 0 589px; padding-left: 1px; }
.st-profile { flex: 0 0 122px; }
.st-a { flex: 0 0 100px; }
.st-b { flex: 0 0 73px; }
.st-c { flex: 0 0 71px; }
.st-d { flex: 0 0 68px; }
.st-e { flex: 0 0 71px; }
.st-f { flex: 0 0 70px; }
.st-net { flex: 1; display: flex; align-items: center; gap: 3px; border-right: 0; box-shadow: none; padding-left: 1px; }
.st-net svg { width: 16px; height: 18px; }

/* windows taskbar */
.taskbar {
  height: 30px;
  display: flex;
  align-items: center;
  padding-left: 3px;
  background: #d4d0c8;
  border-top: 1px solid #f4f2ec;
}
.start {
  flex: 0 0 50px;
  height: 21px;
  margin-right: 10px;
  display: flex;
  align-items: center;
  gap: 1px;
  padding-left: 2px;
  font-weight: bold;
  font-size: 12px;
  border: 1px solid;
  border-color: #fff #404040 #404040 #fff;
}
.start svg { width: 18px; height: 16px; }
.task { flex: 0 0 33.500px; height: 26px; display: flex; align-items: center; justify-content: center; }
.task svg { width: 20px; height: 20px; }
.task-btn {
  flex: 0 0 30px;
  height: 24px;
  margin-right: 3px;
  border: 1px solid;
  border-color: #fff #404040 #404040 #fff;
}
.task-active {
  flex: 0 0 31px;
  margin-left: 3px;
  background: #fff;
  border: 1px solid;
  border-color: #404040 #fff #fff #404040;
}
.task-active svg { width: 18px; height: 18px; }
.tray {
  margin-left: auto;
  flex: 0 0 175px;
  height: 22px;
  display: flex;
  align-items: center;
  gap: 10px;
  padding-left: 7px;
  border: 1px solid;
  border-color: #8c8a84 #fff #fff #8c8a84;
}
.tray svg { width: 14px; height: 16px; flex: none; }
.tray-chev { width: 6px; font-size: 10px; font-weight: bold; }
.tray-time { margin-left: 8px; font-size: 11px; white-space: nowrap; }
.tray-desk { width: 14px; height: 16px; background: linear-gradient(#2f6fb8, #7ab0e8); }

/* watermark laid over the page */
.watermark {
  position: absolute;
  left: 1036px;
  top: 608px;
  display: flex;
  align-items: center;
  gap: 0;
  color: rgba(232, 232, 228, .75);
  font-size: 47px;
  line-height: 68px;
  pointer-events: none;
}
.watermark span { flex: none; transform: scaleX(.68); transform-origin: left center; width: 64px; }
.watermark svg { flex: none; width: 60px; height: 70px; }
```
